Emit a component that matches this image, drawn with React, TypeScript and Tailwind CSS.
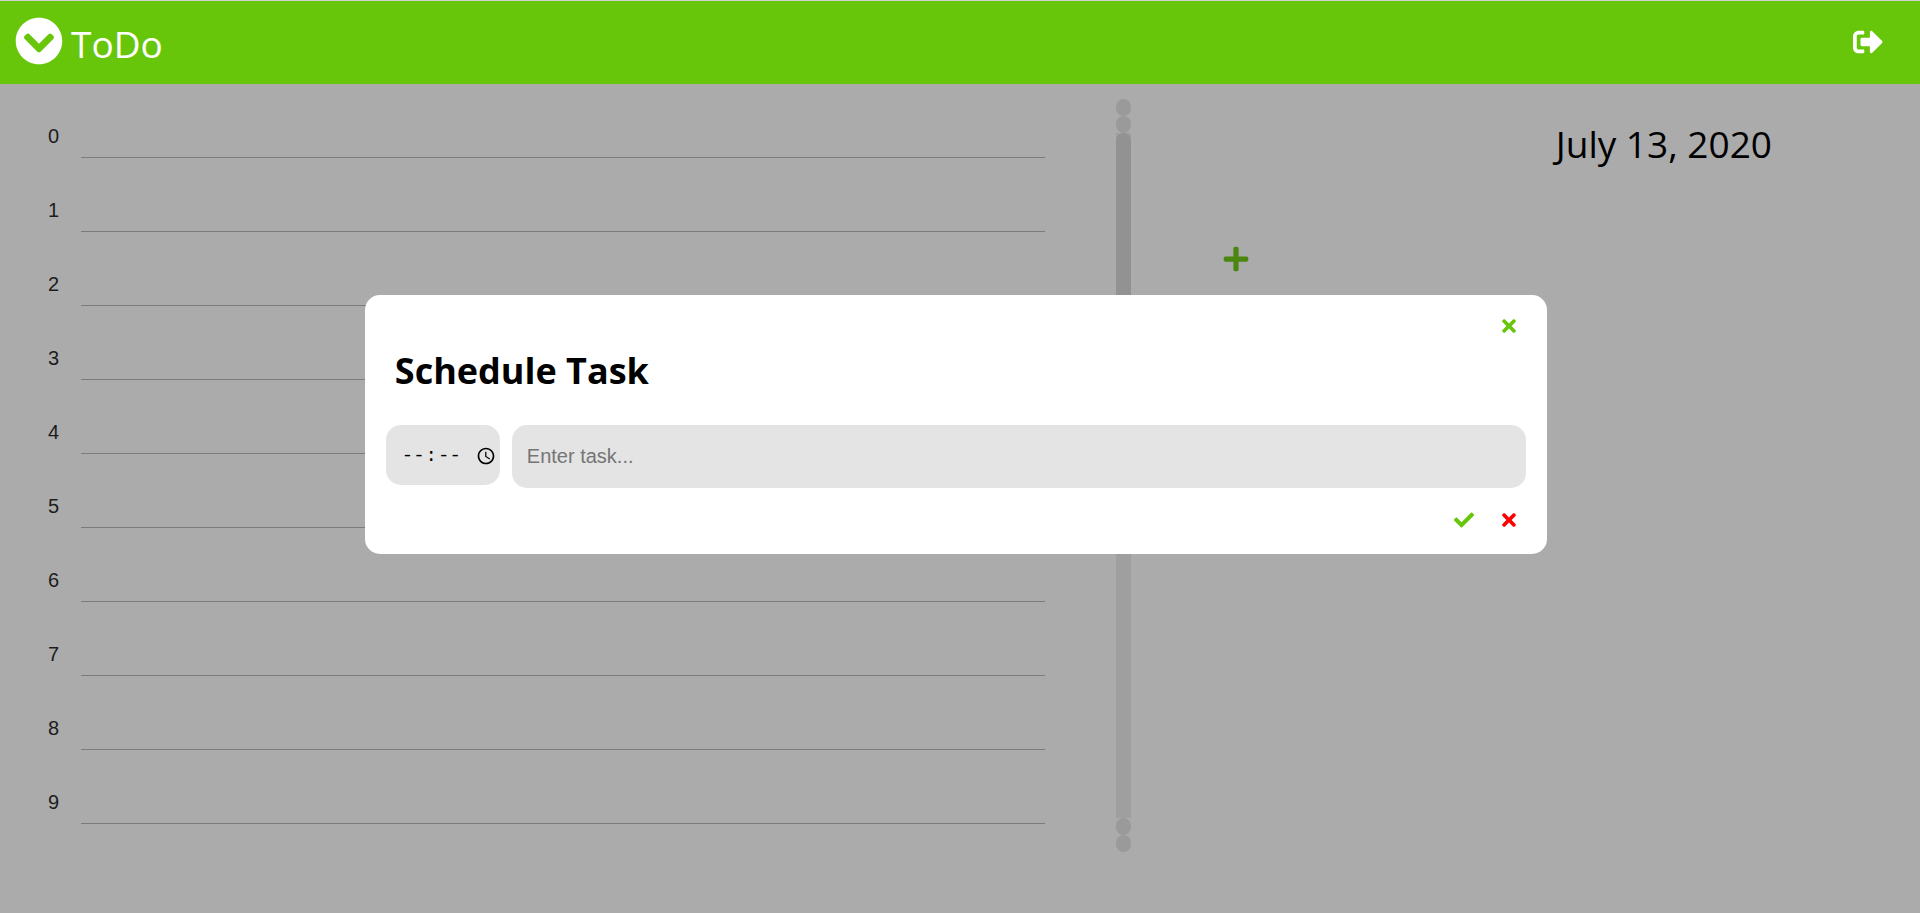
import { FaCheck, FaChevronCircleDown, FaPlus, FaSignOutAlt, FaTimes } from "react-icons/fa";

const hours = [0, 1, 2, 3, 4, 5, 6, 7, 8, 9];

function Header() {
  return (
    <header className="flex h-[84px] items-center justify-between border-t border-[#d0d0d0] bg-[#68c60a] pl-[15px] pr-[37px] text-white">
      <a href="#" className="flex items-center gap-2">
        <FaChevronCircleDown className="mb-1 size-12" />
        <span className="pt-0.5 text-[37px] leading-[50px]">ToDo</span>
      </a>
      <button type="button" aria-label="Sign out" className="pb-0.5">
        <FaSignOutAlt className="size-[30px]" />
      </button>
    </header>
  );
}

function Hours() {
  return (
    <ol className="min-w-0 flex-1 font-['Liberation_Sans',sans-serif] text-xl text-[#1c1c1c]">
      {hours.map((hour) => (
        <li key={hour} className="flex h-[74px] items-end">
          <span className="h-[34px] w-[81px] pl-12 leading-6">{hour}</span>
          <span className="h-px flex-1 bg-[#7c7c7c]" />
        </li>
      ))}
    </ol>
  );
}

function ScrollRail() {
  return (
    <div aria-hidden="true" className="mt-[15px] flex h-[753px] w-[15px] flex-col">
      <span className="h-[17px] rounded-full bg-[#9a9a9a]" />
      <span className="h-[17px] rounded-full bg-[#9a9a9a]" />
      <div className="flex-1 bg-[#9f9f9f]">
        <div className="h-[42%] rounded-full bg-[#929292]" />
      </div>
      <span className="h-[17px] rounded-full bg-[#9a9a9a]" />
      <span className="h-[17px] rounded-full bg-[#9a9a9a]" />
    </div>
  );
}

function TaskDialog() {
  return (
    <div
      role="dialog"
      aria-labelledby="dialog-title"
      className="absolute left-[19%] top-[295px] w-[calc(60%+30px)] rounded-[15px] bg-white px-[21px] pb-6 pt-[21px]"
    >
      <div className="flex justify-end pr-[7px]">
        <button type="button" aria-label="Close" className="text-[#68c60a]">
          <FaTimes className="size-5" />
        </button>
      </div>
      <h1 id="dialog-title" className="mt-2 pl-[9px] text-4xl font-bold leading-[54px]">
        Schedule Task
      </h1>
      <form className="mt-[27px]">
        <div className="flex items-start gap-3">
          <input
            type="time"
            aria-label="Time"
            className="h-[60px] w-[114px] rounded-[15px] bg-[#e4e4e4] pl-[15px] pr-px pt-0.5 font-['Liberation_Mono',monospace] text-[19px] text-black [&::-webkit-datetime-edit-ampm-field]:hidden"
          />
          <input
            type="text"
            aria-label="Task"
            placeholder="Enter task..."
            className="h-[63px] min-w-0 flex-1 rounded-[15px] bg-[#e4e4e4] px-[15px] font-['Liberation_Sans',sans-serif] text-xl placeholder:text-[#757575]"
          />
        </div>
        <div className="mt-[22px] flex justify-end gap-[25px] pr-[7px]">
          <button type="submit" aria-label="Save" className="text-[#68c60a]">
            <FaCheck className="size-5" />
          </button>
          <button type="reset" aria-label="Discard" className="text-[#ff0000]">
            <FaTimes className="size-5" />
          </button>
        </div>
      </form>
    </div>
  );
}

export default function App() {
  return (
    <div className="relative min-h-screen bg-[#ababab] font-['Open_Sans',sans-serif] text-black">
      <Header />
      <main className="flex">
        <div className="flex w-[58.9%] gap-[71px]">
          <Hours />
          <ScrollRail />
        </div>
        <section className="flex-1 pl-[91px] pr-[148px]">
          <h2 className="pt-[35px] text-right text-[37px] leading-[50px]">July 13, 2020</h2>
          <button type="button" aria-label="Add task" className="mt-[76px] block text-[#4b870f]">
            <FaPlus className="size-7" />
          </button>
        </section>
      </main>
      <TaskDialog />
    </div>
  );
}
